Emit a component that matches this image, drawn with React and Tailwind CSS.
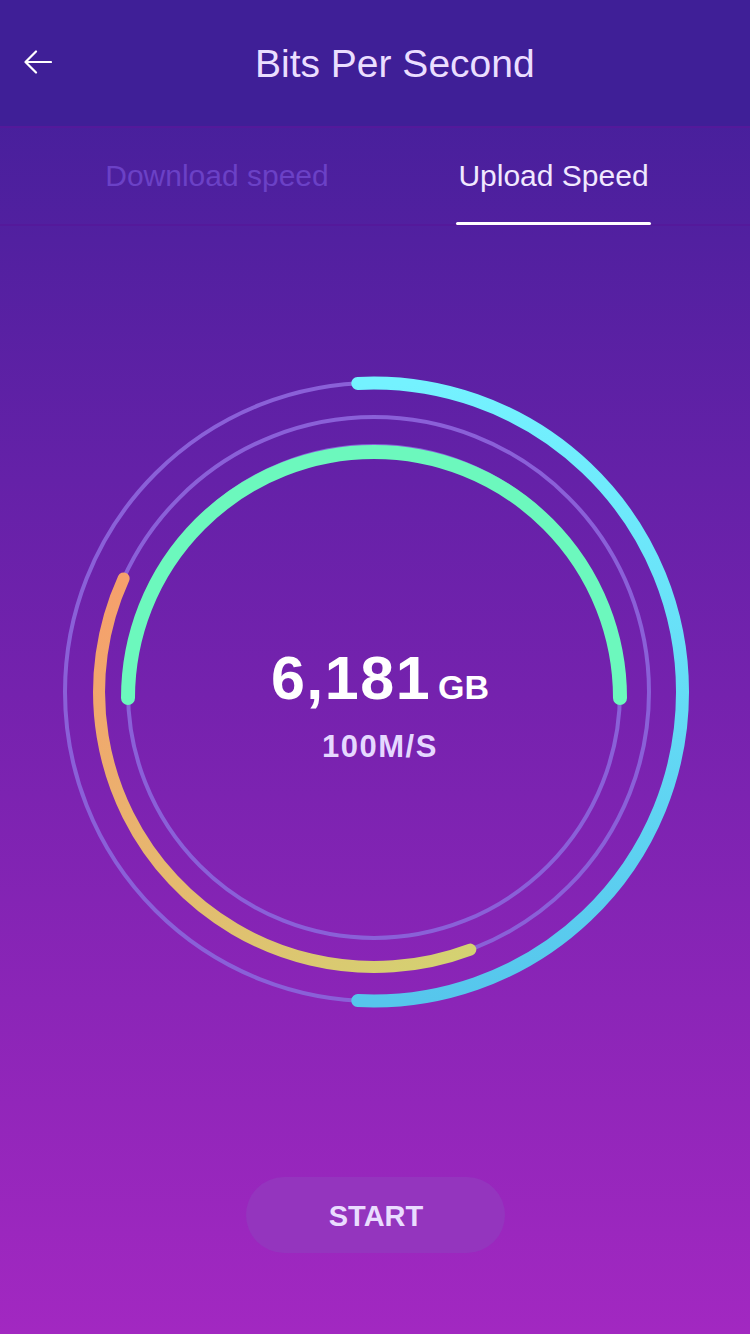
import React, { useState } from "react";

const font = { fontFamily: '"Liberation Sans", Arial, sans-serif' };

function Gauge() {
  return (
    <div className="relative w-full h-[660px] mt-[136px]">
      <svg width="750" height="660" viewBox="0 0 750 660" className="block">
        <defs>
          <linearGradient id="cyan" gradientUnits="userSpaceOnUse" x1="374" y1="21" x2="374" y2="640">
            <stop offset="0" stopColor="#74f2ff" />
            <stop offset="1" stopColor="#56c6ec" />
          </linearGradient>
          <linearGradient id="warm" gradientUnits="userSpaceOnUse" x1="120" y1="216" x2="470" y2="590">
            <stop offset="0" stopColor="#f6a06c" />
            <stop offset="1" stopColor="#d4d272" />
          </linearGradient>
        </defs>
        {/* tracks */}
        <circle cx="374" cy="330" r="309" fill="none" stroke="#8a60d8" strokeWidth="4" />
        <circle cx="374" cy="330" r="275" fill="none" stroke="#8a60d8" strokeWidth="4" />
        <circle cx="374" cy="330" r="246" fill="none" stroke="#8a60d8" strokeWidth="4" />
        {/* arcs */}
        <path d="M357.8 21.4 A309 309 0 1 1 357.8 638.6" fill="none" stroke="url(#cyan)" strokeWidth="13" strokeLinecap="round" />
        <path d="M123.6 216.4 A275 275 0 0 0 470.3 587.6" fill="none" stroke="url(#warm)" strokeWidth="12" strokeLinecap="round" />
        <path d="M128 336 A246 246 0 0 1 620 336" fill="none" stroke="#6cf8bd" strokeWidth="14" strokeLinecap="round" />
      </svg>

      <div className="absolute left-0 right-0 top-[286px] flex flex-col items-center pl-[10px]">
        <div className="flex items-baseline gap-[7px]">
          <span className="text-[61px] leading-none font-bold text-white tracking-[1.5px]">6,181</span>
          <span className="text-[34px] leading-none font-bold text-white">GB</span>
        </div>
        <div className="mt-[22px] text-[31px] leading-none font-bold text-[#e6d8ff] tracking-[1.5px]">100M/S</div>
      </div>
    </div>
  );
}

export default function App() {
  const [tab, setTab] = useState("upload");

  return (
    <div
      className="w-[750px] h-[1334px] overflow-hidden flex flex-col bg-[linear-gradient(180deg,#3f1f98_0%,#6521a8_36%,#7522ae_52%,#8b25b7_75%,#a228c1_100%)]"
      style={font}
    >
      {/* header */}
      <div className="h-[128px] shrink-0 flex items-center px-[24px] border-b-2 border-[#54199b] bg-[#3f1f97]">
        <svg width="28" height="26" viewBox="0 0 28 26" className="shrink-0">
          <path d="M27 12 H2 M12 1.5 L1.5 12 L12 22.5" fill="none" stroke="#ffffff" strokeWidth="2.2" strokeLinecap="round" strokeLinejoin="round" />
        </svg>
        <h1 className="ml-[203px] text-[39px] leading-none text-[#ebdeff] font-normal">Bits Per Second</h1>
      </div>

      {/* tabs */}
      <div className="h-[98px] shrink-0 flex justify-between pl-[103px] pr-[99px] border-b-2 border-[#54199b]">
        <button onClick={() => setTab("download")} className="flex flex-col items-center pt-[33px]">
          <span className={"shrink-0 text-[30px] leading-none " + (tab === "download" ? "text-[#f1e8ff]" : "text-[#6b41c6]")}>
            Download speed
          </span>
          <span className={"shrink-0 mt-[31px] h-[3px] w-[228px] rounded-full " + (tab === "download" ? "bg-white" : "bg-transparent")} />
        </button>
        <button onClick={() => setTab("upload")} className="flex flex-col items-center pt-[33px]">
          <span className={"shrink-0 text-[30px] leading-none " + (tab === "upload" ? "text-[#f1e8ff]" : "text-[#6b41c6]")}>
            Upload Speed
          </span>
          <span className={"shrink-0 mt-[31px] h-[3px] w-[195px] rounded-full " + (tab === "upload" ? "bg-white" : "bg-transparent")} />
        </button>
      </div>

      <Gauge />

      <div className="flex justify-center mt-[155px]">
        <button className="w-[259px] h-[76px] rounded-full bg-[#9435be] pl-[2px] pt-[4px] text-[29px] font-bold text-[#eadcff]">
          START
        </button>
      </div>
    </div>
  );
}
